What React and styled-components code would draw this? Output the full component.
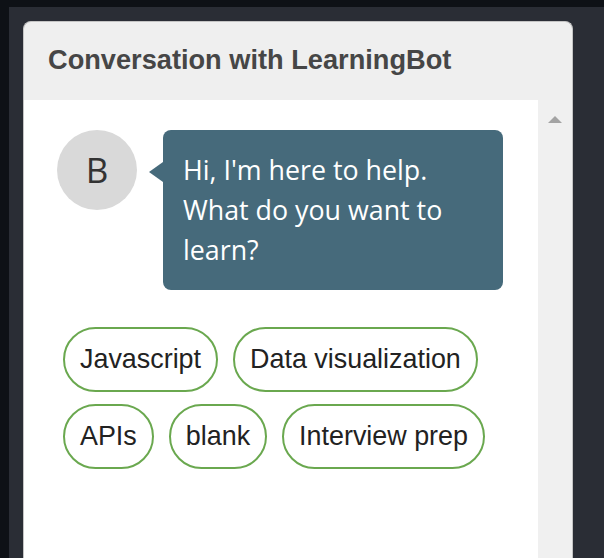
import styled, { createGlobalStyle } from 'styled-components'

const GlobalStyle = createGlobalStyle`
    html, body {
        margin: 0;
        padding: 0;
        background: #0e1116;
    }
    #root {
        padding: 7px 0 0 9px;
    }
`

const topics = ['Javascript', 'Data visualization', 'APIs', 'blank', 'Interview prep']

export default function App() {
    return (
        <>
            <GlobalStyle />
            <Panel>
                <Card>
                    <Header>Conversation with LearningBot</Header>
                    <Body>
                        <Content>
                            <MessageRow>
                                <Avatar>B</Avatar>
                                <Bubble>Hi, I'm here to help. What do you want to learn?</Bubble>
                            </MessageRow>
                            <Chips>
                                {topics.map(topic => (
                                    <Chip key={topic}>{topic}</Chip>
                                ))}
                            </Chips>
                        </Content>
                        <ScrollTrack>
                            <ScrollArrow />
                        </ScrollTrack>
                    </Body>
                </Card>
            </Panel>
        </>
    )
}

const Panel = styled.div`
    background: #2a2d35;
    height: 551px;
    padding: 14px 0 0 14px;
    box-sizing: border-box;
    overflow: hidden;
`

const Card = styled.div`
    width: 550px;
    height: 560px;
    box-sizing: border-box;
    display: flex;
    flex-direction: column;
    background: #efefef;
    border: 1px solid #c4c4c4;
    border-bottom: none;
    border-radius: 8px 8px 0 0;
    overflow: hidden;
`

const Header = styled.div`
    height: 78px;
    flex: none;
    display: flex;
    align-items: center;
    padding: 0 0 2px 24px;
    box-sizing: border-box;
    font-family: "Liberation Sans", Arial, sans-serif;
    font-weight: bold;
    font-size: 27.2px;
    color: #464646;
`

const Body = styled.div`
    flex: 1;
    display: flex;
`

const Content = styled.div`
    flex: 1;
    background: #fff;
    padding: 30px 0 0 33px;
`

const MessageRow = styled.div`
    display: flex;
    align-items: flex-start;
    gap: 26px;
`

const Avatar = styled.div`
    width: 80px;
    height: 80px;
    flex: none;
    border-radius: 50%;
    background: #d9d9d9;
    display: flex;
    align-items: center;
    justify-content: center;
    padding-bottom: 2px;
    box-sizing: border-box;
    font-family: "Open Sans", "Noto Sans", sans-serif;
    font-size: 35px;
    color: #333;
`

const Bubble = styled.div`
    position: relative;
    width: 340px;
    box-sizing: border-box;
    padding: 20px;
    background: #466a7b;
    border-radius: 8px;
    font-family: "Open Sans", "Noto Sans", sans-serif;
    font-size: 26.8px;
    line-height: 40px;
    color: #fff;

    &::before {
        content: '';
        position: absolute;
        left: -14px;
        top: 32px;
        border-style: solid;
        border-width: 10px 14px 10px 0;
        border-color: transparent #466a7b transparent transparent;
    }
`

const Chips = styled.div`
    display: flex;
    flex-wrap: wrap;
    gap: 12px 15px;
    margin: 37px 0 0 6px;
`

const Chip = styled.div`
    padding: 16px 15px;
    border: 2px solid #6aa84f;
    border-radius: 40px;
    font-family: "Liberation Sans", Arial, sans-serif;
    font-size: 26.9px;
    line-height: 29px;
    color: #222;
`

const ScrollTrack = styled.div`
    width: 34px;
    flex: none;
    background: #f0f0f0;
    display: flex;
    justify-content: center;
    padding-top: 16px;
    box-sizing: border-box;
`

const ScrollArrow = styled.div`
    width: 0;
    height: 0;
    border-style: solid;
    border-width: 0 7px 7px 7px;
    border-color: transparent transparent #a3a3a3 transparent;
`
